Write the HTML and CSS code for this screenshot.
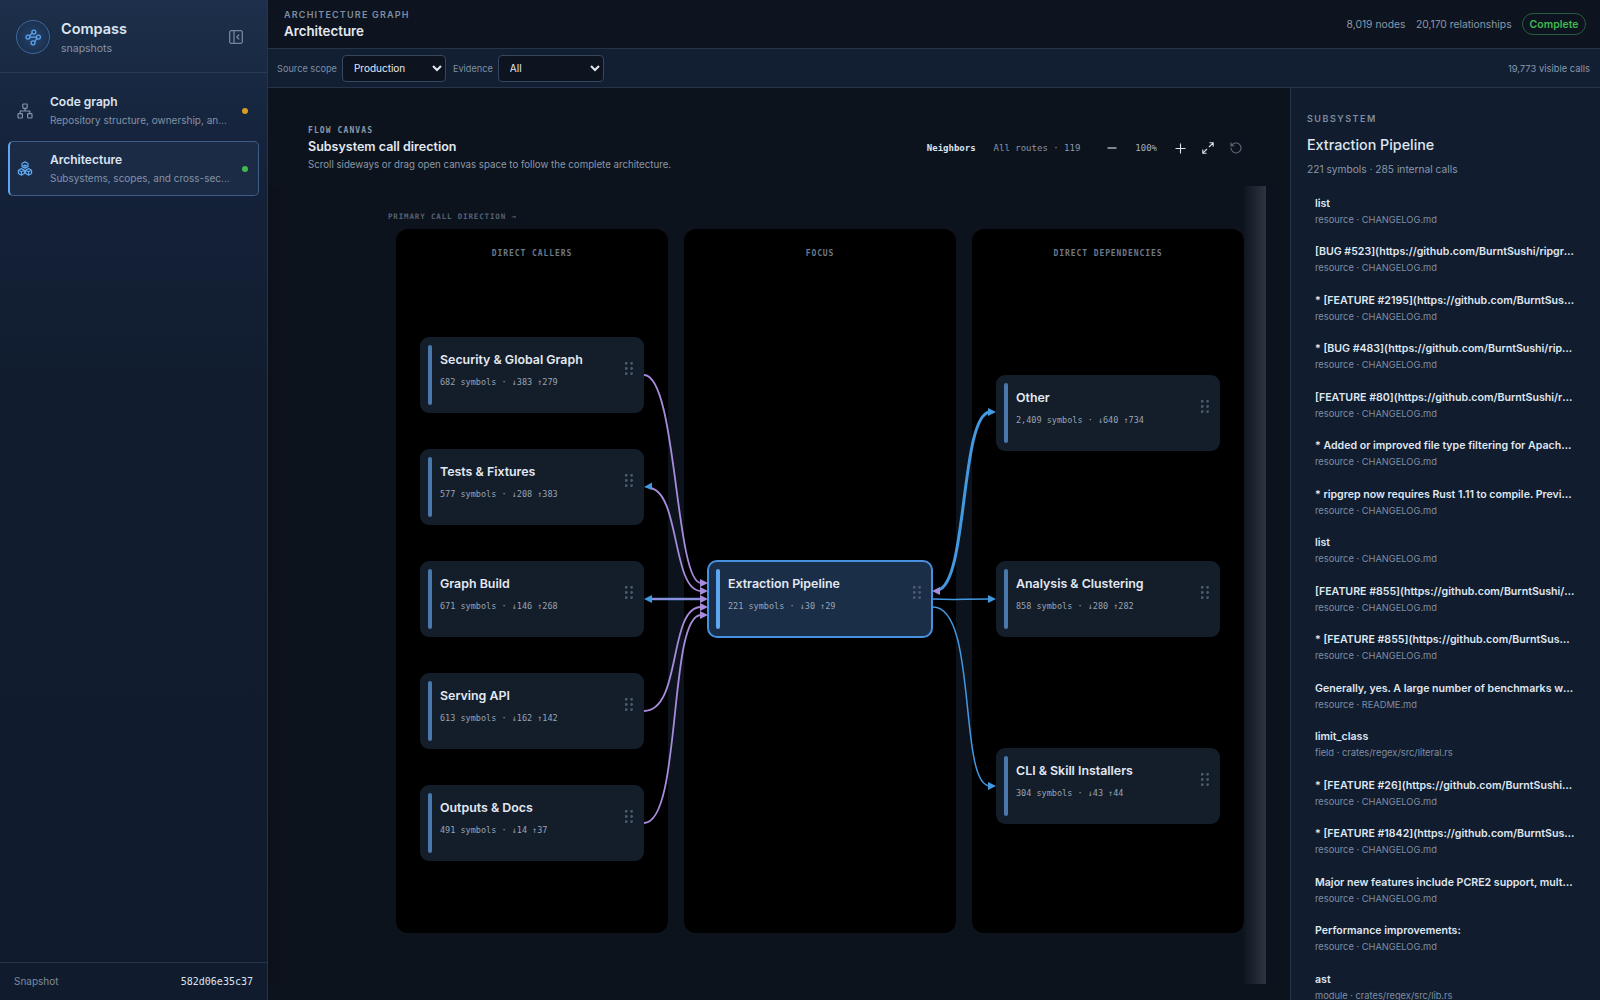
FILE: index.html
```html
<!DOCTYPE html>
<html lang="en">
<head>
<meta charset="utf-8">
<title>Compass – Architecture</title>
<link rel="stylesheet" href="styles.css">
</head>
<body>
<div class="app">
  <aside class="sidebar">
    <div class="brand">
      <div class="brand-mark">
        <svg viewBox="0 0 24 24" width="20" height="20" fill="none" stroke="#5ea6f0" stroke-width="1.5" stroke-linecap="round"><circle cx="13" cy="6" r="2.4"/><circle cx="6" cy="12" r="2.4"/><circle cx="18.5" cy="12" r="2.4"/><circle cx="12" cy="19" r="2.4"/><path d="M11 7.5 7.8 10.4M8.4 12h7.7M16.8 13.8 13.9 17.5"/></svg>
      </div>
      <div class="brand-text">
        <div class="brand-name">Compass</div>
        <div class="brand-sub">snapshots</div>
      </div>
      <svg class="collapse" viewBox="0 0 14 14" width="14" height="14" fill="none" stroke="#75859b" stroke-width="1.3" stroke-linecap="round" stroke-linejoin="round"><rect x="0.7" y="0.7" width="12.6" height="12.6" rx="1.5"/><path d="M5 1v12M9.8 5 7.8 7l2 2"/></svg>
    </div>
    <nav class="nav">
      <div class="nav-item">
        <svg class="nav-icon" viewBox="0 0 16 16" width="16" height="16" fill="none" stroke="#8494aa" stroke-width="1.2" stroke-linejoin="round"><rect x="5.8" y="1" width="4.4" height="4.4" rx="0.8"/><rect x="1" y="10.6" width="4.4" height="4.4" rx="0.8"/><rect x="10.6" y="10.6" width="4.4" height="4.4" rx="0.8"/><path d="M8 5.4V8M3.2 10.6V8h9.6v2.6"/></svg>
        <div class="nav-text"><div class="nav-title">Code graph</div><div class="nav-sub">Repository structure, ownership, and dependencies</div></div>
        <span class="dot dot-amber"></span>
      </div>
      <div class="nav-item active">
        <svg class="nav-icon" viewBox="0 0 16 16" width="16" height="16" fill="none" stroke="#5ea6f0" stroke-width="1.2" stroke-linejoin="round"><path d="M8 .9l3 1.6v3.2L8 7.3 5 5.7V2.5zM5 5.7l3-1.6 3 1.6M8 4.1V7.3"/><path d="M4.4 7.6l3 1.6v3.3l-3 1.6-3-1.6V9.2zM1.4 9.2l3 1.6 3-1.6M4.4 10.8v3.3"/><path d="M11.6 7.6l3 1.6v3.3l-3 1.6-3-1.6V9.2zM8.6 9.2l3 1.6 3-1.6M11.6 10.8v3.3"/></svg>
        <div class="nav-text"><div class="nav-title">Architecture</div><div class="nav-sub">Subsystems, scopes, and cross-section routes</div></div>
        <span class="dot dot-green"></span>
      </div>
    </nav>
    <div class="side-foot"><span class="foot-label">Snapshot</span><span class="foot-hash">582d06e35c37</span></div>
  </aside>

  <main class="main">
    <header class="topbar">
      <div class="top-heading">
        <div class="eyebrow">ARCHITECTURE GRAPH</div>
        <h1 class="page-title">Architecture</h1>
      </div>
      <div class="stats"><span>8,019 nodes</span><span>20,170 relationships</span><span class="pill">Complete</span></div>
    </header>
    <div class="toolbar">
      <label class="field">Source scope
        <select class="sel sel-scope"><option>Production</option></select>
      </label>
      <label class="field">Evidence
        <select class="sel sel-evidence"><option>All</option></select>
      </label>
      <span class="visible">19,773 visible calls</span>
    </div>
    <div class="content">
      <section class="canvas">
        <div class="canvas-head">
          <div>
            <div class="kicker">FLOW CANVAS</div>
            <h2 class="canvas-title">Subsystem call direction</h2>
            <p class="canvas-desc">Scroll sideways or drag open canvas space to follow the complete architecture.</p>
          </div>
          <div class="controls">
            <span class="ctl-strong">Neighbors</span>
            <span class="ctl-routes">All routes · 119</span>
            <svg class="ic-minus" viewBox="0 0 10 10" width="10" height="10" stroke="#dbe4ee" stroke-width="1.1"><path d="M.5 5h9"/></svg>
            <span class="ctl-zoom">100%</span>
            <svg class="ic-plus" viewBox="0 0 11 11" width="11" height="11" stroke="#dbe4ee" stroke-width="1.1"><path d="M.5 5.5h10M5.5.5v10"/></svg>
            <svg class="ic-expand" viewBox="0 0 12 12" width="12" height="12" fill="none" stroke="#dbe4ee" stroke-width="1.1"><path d="M7.5.8h3.7v3.7M11.2.8 7 5M4.5 11.2H.8V7.5M.8 11.2 5 7"/></svg>
            <svg class="ic-reset" viewBox="0 0 12 12" width="12" height="12" fill="none" stroke="#5e6a7a" stroke-width="1.1" stroke-linecap="round" stroke-linejoin="round"><path d="M1 6a5 5 0 1 0 1.6-3.7L1 3.8M1 .9v2.9h2.9"/></svg>
          </div>
        </div>
        <div class="scroller">
          <div class="direction">PRIMARY CALL DIRECTION →</div>
          <div class="stage">
            <div class="col col-callers">
              <div class="col-head">DIRECT CALLERS</div>
              <div class="node"><div class="n-title">Security &amp; Global Graph</div><div class="n-sub">682 symbols · ↓383 ↑279</div><i class="grip"></i></div>
              <div class="node"><div class="n-title">Tests &amp; Fixtures</div><div class="n-sub">577 symbols · ↓208 ↑383</div><i class="grip"></i></div>
              <div class="node"><div class="n-title">Graph Build</div><div class="n-sub">671 symbols · ↓146 ↑268</div><i class="grip"></i></div>
              <div class="node"><div class="n-title">Serving API</div><div class="n-sub">613 symbols · ↓162 ↑142</div><i class="grip"></i></div>
              <div class="node"><div class="n-title">Outputs &amp; Docs</div><div class="n-sub">491 symbols · ↓14 ↑37</div><i class="grip"></i></div>
            </div>
            <div class="col col-focus">
              <div class="col-head">FOCUS</div>
              <div class="node node-focus"><div class="n-title">Extraction Pipeline</div><div class="n-sub">221 symbols · ↓30 ↑29</div><i class="grip"></i></div>
            </div>
            <div class="col col-deps">
              <div class="col-head">DIRECT DEPENDENCIES</div>
              <div class="node"><div class="n-title">Other</div><div class="n-sub">2,409 symbols · ↓640 ↑734</div><i class="grip"></i></div>
              <div class="node"><div class="n-title">Analysis &amp; Clustering</div><div class="n-sub">858 symbols · ↓280 ↑282</div><i class="grip"></i></div>
              <div class="node"><div class="n-title">CLI &amp; Skill Installers</div><div class="n-sub">304 symbols · ↓43 ↑44</div><i class="grip"></i></div>
            </div>
            <svg class="edges" viewBox="396 229 848 704" fill="none">
              <path d="M650 599H700" stroke="#4299e1" stroke-width="2.4"/>
              <g stroke="#a78bdc" stroke-width="1.8">
                <path d="M644 375C677 375 675 583 701 583"/>
                <path d="M650 488C680 492 672 591 701 591"/>
                <path d="M650 599H701" stroke-width="1.5"/>
                <path d="M644 711C682 711 668 607 701 607"/>
                <path d="M644 823C682 823 668 615 701 615"/>
              </g>
              <path fill="#a78bdc" d="M708 583l-8-4v8zM708 591l-8-4v8zM708 599l-8-4v8zM708 607l-8-4v8zM708 615l-8-4v8z"/>
              <path fill="#4299e1" d="M644 487l8-4.5v7.5zM644 599l8-4v8z"/>
              <path d="M938 590C968 584 960 414 990 412" stroke="#4299e1" stroke-width="3"/>
              <path d="M932 599C960 600 960 599 990 599" stroke="#4299e1" stroke-width="1.5"/>
              <path d="M933 607C978 607 958 786 990 786" stroke="#4299e1" stroke-width="1.5"/>
              <path d="M932 591l8-4v8z" fill="#a78bdc"/>
              <path d="M996 412l-8-4v8zM996 599l-8-4v8zM996 786l-8-4v8z" fill="#4299e1"/>
            </svg>
          </div>
          <div class="fade-left"></div>
          <div class="fade-right"></div>
        </div>
      </section>
      <aside class="detail">
        <div class="d-eyebrow">SUBSYSTEM</div>
        <h2 class="d-title">Extraction Pipeline</h2>
        <div class="d-sub">221 symbols · 285 internal calls</div>
        <ul class="symbols">
          <li><div class="s-title">list</div><div class="s-sub">resource · CHANGELOG.md</div></li>
          <li><div class="s-title">[BUG #523](https://github.com/BurntSushi/ripgrep/issues/523):</div><div class="s-sub">resource · CHANGELOG.md</div></li>
          <li><div class="s-title">* [FEATURE #2195](https://github.com/BurntSushi/ripgrep/issues/2195):</div><div class="s-sub">resource · CHANGELOG.md</div></li>
          <li><div class="s-title">* [BUG #483](https://github.com/BurntSushi/ripgrep/issues/483):</div><div class="s-sub">resource · CHANGELOG.md</div></li>
          <li><div class="s-title">[FEATURE #80](https://github.com/BurntSushi/ripgrep/issues/80):</div><div class="s-sub">resource · CHANGELOG.md</div></li>
          <li><div class="s-title">* Added or improved file type filtering for Apache Avro files</div><div class="s-sub">resource · CHANGELOG.md</div></li>
          <li><div class="s-title">* ripgrep now requires Rust 1.11 to compile. Previously it could</div><div class="s-sub">resource · CHANGELOG.md</div></li>
          <li><div class="s-title">list</div><div class="s-sub">resource · CHANGELOG.md</div></li>
          <li><div class="s-title">[FEATURE #855](https://github.com/BurntSushi/ripgrep/issues/855):</div><div class="s-sub">resource · CHANGELOG.md</div></li>
          <li><div class="s-title">* [FEATURE #855](https://github.com/BurntSushi/ripgrep/issues/855):</div><div class="s-sub">resource · CHANGELOG.md</div></li>
          <li><div class="s-title">Generally, yes. A large number of benchmarks were performed</div><div class="s-sub">resource · README.md</div></li>
          <li><div class="s-title">limit_class</div><div class="s-sub">field · crates/regex/src/literal.rs</div></li>
          <li><div class="s-title">* [FEATURE #26](https://github.com/BurntSushi/ripgrep/issues/26):</div><div class="s-sub">resource · CHANGELOG.md</div></li>
          <li><div class="s-title">* [FEATURE #1842](https://github.com/BurntSushi/ripgrep/issues/1842):</div><div class="s-sub">resource · CHANGELOG.md</div></li>
          <li><div class="s-title">Major new features include PCRE2 support, multiline search and more</div><div class="s-sub">resource · CHANGELOG.md</div></li>
          <li><div class="s-title">Performance improvements:</div><div class="s-sub">resource · CHANGELOG.md</div></li>
          <li><div class="s-title">ast</div><div class="s-sub">module · crates/regex/src/lib.rs</div></li>
        </ul>
      </aside>
    </div>
  </main>
</div>
</body>
</html>
```
FILE: styles.css
```css
* { box-sizing: border-box; }
html, body { margin: 0; height: 100%; overflow: hidden; }
body { font-family: Inter, "Liberation Sans", sans-serif; color: #dfe7f1; background: #0d131c; }
h1, h2, p, ul { margin: 0; padding: 0; }
ul { list-style: none; }
.app { display: flex; height: 1000px; }

/* Sidebar */
.sidebar { width: 268px; flex: none; display: flex; flex-direction: column; background: linear-gradient(180deg, #1d2f4a 0%, #14223a 16%, #111c2e 40%, #101b2d 100%); border-right: 1px solid #26344a; }
.brand { height: 73px; flex: none; display: flex; align-items: center; padding: 1px 24px 0 16px; border-bottom: 1px solid #2a3a55; }
.brand-mark { width: 34px; height: 34px; border-radius: 50%; flex: none; display: flex; align-items: center; justify-content: center; background: radial-gradient(circle, #24426a 0%, #1b3150 70%); border: 1px solid #3d689c; }
.brand-text { margin-left: 11px; flex: 1; padding-top: 2px; }
.brand-name { font-size: 14.5px; line-height: 18px; font-weight: 600; color: #dde6f2; }
.brand-sub { font-size: 10.5px; line-height: 14px; margin-top: 4px; color: #8594a8; }
.nav { flex: 1; padding: 10px 8px 0; display: flex; flex-direction: column; gap: 3px; }
.nav-item { height: 55px; display: flex; align-items: center; padding: 0 10px 0 9px; border: 1px solid transparent; border-left-width: 2px; border-radius: 5px; }
.nav-item.active { background: #1b2b46; border-color: #3e5c88; border-left-color: #5ea6f0; }
.nav-icon { flex: none; margin-left: -2px; margin-right: 17px; }
.nav-text { flex: 1; min-width: 0; }
.nav-title { font-size: 12px; line-height: 16px; font-weight: 600; color: #dbe4ef; }
.nav-sub { font-size: 10px; line-height: 14px; margin-top: 3px; color: #8392a6; white-space: nowrap; overflow: hidden; text-overflow: ellipsis; }
.dot { width: 6px; height: 6px; border-radius: 50%; flex: none; margin-left: 12px; }
.dot-amber { background: #d99a26; }
.dot-green { background: #3fb950; }
.side-foot { height: 38px; flex: none; display: flex; align-items: center; justify-content: space-between; padding: 0 14px 1px 14px; border-top: 1px solid #26344a; }
.foot-label { font-size: 10px; color: #7d8b9e; }
.foot-hash { font-family: "DejaVu Sans Mono", monospace; font-size: 10px; color: #dbe4ef; }

/* Main */
.main { flex: 1; min-width: 0; display: flex; flex-direction: column; }
.topbar { height: 49px; flex: none; display: flex; align-items: center; justify-content: space-between; padding: 0 14px 0 16px; background: #0d141f; border-bottom: 1px solid #26344a; }
.top-heading { padding-bottom: 1px; }
.eyebrow { font-size: 9px; line-height: 12px; font-weight: 600; letter-spacing: 1.2px; color: #7f8ea3; }
.page-title { font-size: 13.3px; line-height: 16px; margin-top: 2px; font-weight: 600; color: #e2e9f3; }
.stats { display: flex; align-items: center; gap: 10.5px; font-size: 10.3px; color: #8a98ab; }
.pill { height: 22px; padding: 0 6.5px; display: flex; align-items: center; border: 1px solid #2a5a3e; border-radius: 11px; font-size: 10.5px; font-weight: 600; color: #3fb950; }
.toolbar { height: 39px; flex: none; display: flex; align-items: center; gap: 7px; padding: 0 10px 0 9px; background: #121e32; border-bottom: 1px solid #26344a; }
.field { display: flex; align-items: center; gap: 5px; font-size: 9.2px; color: #7f8ea3; }
.sel { color-scheme: dark; height: 27px; border: 1px solid #35465f; border-radius: 4px; background-color: #0d1420; color: #e2e9f3; font-family: Inter, sans-serif; font-size: 10px; padding-left: 7px; }
.sel-scope { width: 104px; }
.sel-evidence { width: 106px; }
.visible { margin-left: auto; font-size: 9.4px; color: #8a98ab; }

.content { flex: 1; min-height: 0; display: flex; }

/* Canvas */
.canvas { flex: 1; min-width: 0; display: flex; flex-direction: column; background: #0d131c; }
.canvas-head { height: 98px; flex: none; display: flex; justify-content: space-between; padding: 37px 48px 0 40px; }
.kicker { font-family: "DejaVu Sans Mono", monospace; font-size: 8px; font-weight: 700; line-height: 12px; letter-spacing: 1.1px; color: #8b98aa; }
.canvas-title { font-size: 12.5px; line-height: 16px; margin-top: 2px; font-weight: 600; color: #e2e9f3; }
.canvas-desc { font-size: 9.7px; line-height: 14px; margin-top: 3px; color: #8a97a9; }
.controls { display: flex; align-items: center; height: 22px; margin-top: 12px; font-family: "DejaVu Sans Mono", monospace; font-size: 9px; }
.ctl-strong { color: #dbe4ef; font-weight: 700; margin-right: 18px; }
.ctl-routes { color: #8a97a9; margin-right: 27px; }
.ctl-zoom { color: #a3afbf; margin: 0 18px; }
.ic-expand { margin: 0 16px 0 16px; }
.scroller { position: relative; width: 998px; height: 798px; flex: none; padding: 25px 0 0 120px; }
.direction { font-family: "DejaVu Sans Mono", monospace; font-size: 7.5px; font-weight: 700; line-height: 12px; letter-spacing: .85px; color: #566172; height: 18px; }
.stage { position: relative; margin-left: 8px; width: 848px; height: 704px; display: grid; grid-template-columns: repeat(3, 272px); gap: 16px; }
.edges { position: absolute; inset: 0; width: 848px; height: 704px; pointer-events: none; }
.col { background: #000; border-radius: 12px; padding: 19px 24px 0; display: flex; flex-direction: column; }
.col-head { font-family: "DejaVu Sans Mono", monospace; font-size: 8px; font-weight: 700; line-height: 12px; letter-spacing: .92px; text-align: center; color: #6d7888; height: 12px; flex: none; }
.col-callers { gap: 36px; }
.col-callers .col-head { margin-bottom: 41px; }
.col-focus .col-head { margin-bottom: 301px; }
.col-deps .col-head { margin-bottom: 115px; }
.col-deps .node + .node { margin-top: 110px; }
.col-deps .node + .node + .node { margin-top: 111px; }
.node { position: relative; width: 224px; height: 76px; flex: none; background: #141d2a; border-radius: 9px; padding: 14px 30px 0 20px; }
.node::before { content: ""; position: absolute; left: 8px; top: 8px; bottom: 8px; width: 4px; border-radius: 2px; background: #4a78ad; }
.n-title { font-size: 12.4px; line-height: 18px; font-weight: 600; color: #e2e9f3; white-space: nowrap; }
.n-sub { font-family: "DejaVu Sans Mono", monospace; font-size: 8.5px; line-height: 12px; margin-top: 7px; color: #97a4b5; white-space: nowrap; }
.grip { position: absolute; right: 11px; top: 25px; width: 8px; height: 13px; background-image: radial-gradient(circle at 1.25px 1.25px, #4d5b6e 1.25px, transparent 1.4px); background-size: 5.5px 5.2px; }
.node-focus { width: 226px; height: 78px; margin: -1px; background: #1b2e48; border: 2px solid #4890e0; border-radius: 10px; padding: 13px 28px 0 19px; }
.node-focus::before { left: 7px; top: 7px; bottom: 7px; background: #5ea6f0; }
.node-focus .grip { right: 10px; top: 24px; }
.fade-left { position: absolute; left: 0; top: 0; bottom: 0; width: 24px; background: linear-gradient(90deg, rgba(0,0,0,.12), transparent); pointer-events: none; }
.fade-right { position: absolute; right: 0; top: 0; bottom: 0; width: 24px; background: linear-gradient(90deg, rgba(90,100,120,0), rgba(90,100,120,.42)); pointer-events: none; }

/* Detail */
.detail { width: 310px; flex: none; background: #111c2e; border-left: 1px solid #26344a; padding: 25px 16px 0; overflow: hidden; }
.d-eyebrow { font-size: 9px; line-height: 12px; font-weight: 600; letter-spacing: 1.5px; color: #7f8ea3; }
.d-title { font-size: 14.3px; line-height: 20px; margin-top: 10px; font-weight: 500; color: #dfe7f1; }
.d-sub { font-size: 10.2px; line-height: 14px; margin-top: 7px; color: #8a98ab; }
.symbols { margin-top: 11px; }
.symbols li { padding: 8px; height: 48.47px; }
.s-title { font-size: 10.6px; line-height: 17px; padding-right: 1px; font-weight: 600; color: #dfe7f1; white-space: nowrap; overflow: hidden; text-overflow: ellipsis; }
.s-sub { font-size: 9.3px; line-height: 16px; color: #7f8ea3; white-space: nowrap; overflow: hidden; text-overflow: ellipsis; }
```
